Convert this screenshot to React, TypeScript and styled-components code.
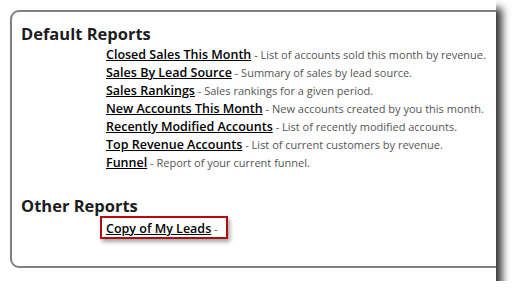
import styled, { createGlobalStyle } from "styled-components";

const GlobalStyle = createGlobalStyle`
  html, body {
    margin: 0;
    padding: 0;
    background: #fff;
  }
  body {
    font-family: "Open Sans", "DejaVu Sans", sans-serif;
  }
`;

type Report = { name: string; desc: string };

const defaultReports: Report[] = [
  { name: "Closed Sales This Month", desc: "List of accounts sold this month by revenue." },
  { name: "Sales By Lead Source", desc: "Summary of sales by lead source." },
  { name: "Sales Rankings", desc: "Sales rankings for a given period." },
  { name: "New Accounts This Month", desc: "New accounts created by you this month." },
  { name: "Recently Modified Accounts", desc: "List of recently modified accounts." },
  { name: "Top Revenue Accounts", desc: "List of current customers by revenue." },
  { name: "Funnel", desc: "Report of your current funnel." },
];

export default function App() {
  return (
    <>
      <GlobalStyle />
      <Paper>
        <Panel>
          <Heading>Default Reports</Heading>
          <List>
            {defaultReports.map((r) => (
              <Item key={r.name}>
                <ReportLink href="#">{r.name}</ReportLink>
                <Desc> - {r.desc}</Desc>
              </Item>
            ))}
          </List>
          <Heading $spaced>Other Reports</Heading>
          <List>
            <Item $highlighted>
              <ReportLink href="#">Copy of My Leads</ReportLink>
              <Desc> -</Desc>
            </Item>
          </List>
        </Panel>
      </Paper>
    </>
  );
}

const Paper = styled.div`
  width: 496px;
  height: 281px;
  background: #fff;
  overflow: hidden;
  box-shadow: 6px 8px 8px rgba(0, 0, 0, 0.8);
  padding: 10px 0 0 10px;
  box-sizing: border-box;
`;

const Panel = styled.div`
  width: 520px;
  height: 258px;
  box-sizing: border-box;
  border: 2px solid #808080;
  border-radius: 9px;
  padding: 12px 0 0 9px;
`;

const Heading = styled.h2<{ $spaced?: boolean }>`
  margin: ${(p) => (p.$spaced ? "26px" : "0")} 0 0 0;
  font-size: 16.5px;
  line-height: 20px;
  font-weight: 700;
  color: #1c1c1c;
`;

const List = styled.ul`
  list-style: none;
  margin: 0;
  padding: 0 0 0 85px;
`;

const Item = styled.li<{ $highlighted?: boolean }>`
  height: 18px;
  line-height: 18px;
  white-space: nowrap;
  ${(p) =>
    p.$highlighted &&
    `
    display: inline-block;
    height: 19px;
    line-height: 19px;
    margin: -5px 0 0 -6px;
    padding: 0 8px 0 4px;
    border: 2px solid #b00d0d;
    box-shadow: 2px 3px 4px rgba(0, 0, 0, 0.35);
  `}
`;

const ReportLink = styled.a`
  font-size: 12.5px;
  font-weight: 600;
  color: #000;
  text-decoration: underline;
`;

const Desc = styled.span`
  font-size: 11px;
  color: #555;
`;
